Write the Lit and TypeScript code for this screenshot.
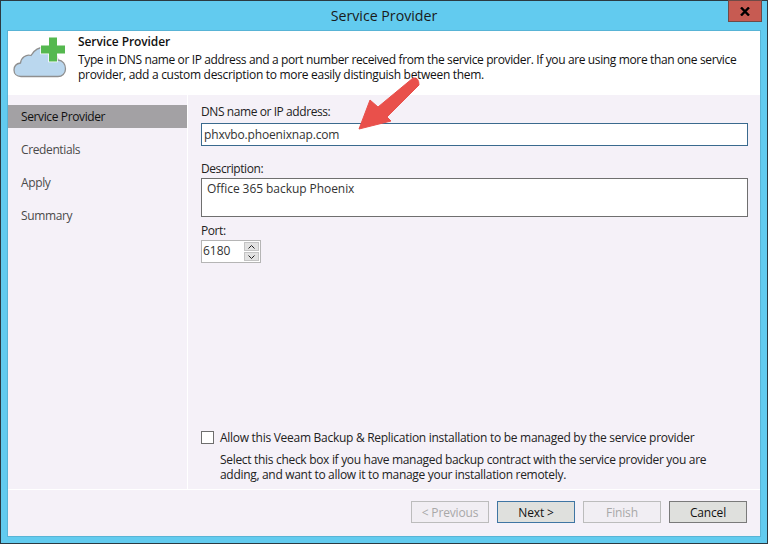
import { LitElement, html, css } from "lit";
import { customElement } from "lit/decorators.js";

@customElement("app-root")
export class AppRoot extends LitElement {
  static styles = css`
    :host { display: block; width: 768px; height: 544px; position: relative; overflow: hidden;
      font-family: "Open Sans", "Noto Sans", sans-serif; font-size: 12px; color: #111; }
    * { box-sizing: border-box; }
    .win { width: 768px; height: 544px; background: #62cbef; border: 1px solid #2b3a42;
      display: flex; flex-direction: column; position: relative; }
    .titlebar { height: 30px; flex: none; display: flex; align-items: center; justify-content: center;
      font-size: 14.2px; color: #1a1a1a; padding-bottom: 2px; }
    .close { position: absolute; right: 5px; top: -1px; width: 34px; height: 22px; background: #c75b52;
      border: 1px solid #6e4a46; display: flex; align-items: center; justify-content: center; }
    .body { margin: 0 7px 7px 7px; flex: 1; display: flex; flex-direction: column; background: #f5f1f8;
      box-shadow: 0 0 0 1px #58b4d6; }
    .head { height: 64px; flex: none; background: #fff; display: flex; }
    .cloud { width: 70px; flex: none; padding: 5px 0 0 5px; }
    .head-text { padding-top: 3px; line-height: 15px; letter-spacing: -0.3px; white-space: nowrap; }
    .head-text b { display: block; font-weight: 600; line-height: 15px; margin-bottom: 3px; letter-spacing: -0.1px; }
    .first { letter-spacing: -0.365px; }
    .middle { flex: 1; display: flex; min-height: 0; border-bottom: 1px solid #fff; }
    .side { width: 179px; flex: none; padding-top: 10px; }
    .step { height: 23px; padding-left: 13px; margin-bottom: 10px; display: flex; align-items: center;
      color: #4a4a4a; letter-spacing: -0.38px; }
    .step.sel { background: #a3a1a4; color: #111; }
    .main { flex: 1; border-left: 1px solid #fff; padding: 9px 12px 0 13px; display: flex; flex-direction: column; }
    label { display: block; line-height: 16px; letter-spacing: -0.42px; color: #222; }
    .input { height: 23px; margin-top: 3px; background: #fff; border: 1px solid #3a6a8e; padding-left: 2px;
      display: flex; align-items: center; color: #333; letter-spacing: -0.16px; }
    .desc { height: 39px; margin-top: 1px; background: #fff; border: 1px solid #6f6f6f; padding: 2px 0 0 5px;
      line-height: 16px; color: #333; letter-spacing: -0.06px; }
    .gap-a { margin-top: 15px; }
    .gap-b { margin-top: 6px; }
    .port { width: 60px; height: 23px; margin-top: 1px; background: #fff; border: 1px solid #b5b5b5;
      display: flex; align-items: stretch; }
    .port span { flex: 1; padding-left: 1px; line-height: 19px; color: #333; }
    .spin { width: 17px; display: flex; flex-direction: column; gap: 1px; background: #fff; padding: 1px; }
    .spin i { flex: 1; background: #e2e2e2; border: 1px solid #c4c4c4; display: flex; align-items: center; justify-content: center; }
    .bottom { margin-top: auto; padding-bottom: 7px; }
    .check { display: flex; align-items: center; gap: 6px; letter-spacing: -0.28px; color: #222; height: 16px; }
    .box { width: 13px; height: 13px; background: #fff; border: 1px solid #6e6e6e; flex: none; }
    .note { margin: 7px 0 0 19px; line-height: 15px; letter-spacing: -0.31px; color: #222; }
    .foot { height: 46px; flex: none; display: flex; justify-content: flex-end; gap: 8px; padding: 11px 13px 0 0; }
    .btn { width: 78px; height: 22px; border: 1px solid #7a7a7a; background: #dfe0dd; display: flex;
      align-items: center; justify-content: center; color: #111; letter-spacing: -0.15px; }
    .btn.def { border-color: #3f75a3; }
    .btn.off { border-color: #bcbcbc; background: #f1eef3; color: #a8a8a8; }
    .arrow { position: absolute; left: 0; top: 0; pointer-events: none; }
  `;

  render() {
    return html`
      <div class="win">
        <div class="titlebar">Service Provider</div>
        <div class="close">
          <svg width="10" height="9" viewBox="0 0 10 9"><path d="M1 0.5L9 8.5M9 0.5L1 8.5" stroke="#000" stroke-width="2.4" fill="none"/></svg>
        </div>
        <div class="body">
          <div class="head">
            <div class="cloud">
              <svg width="56" height="44" viewBox="0 0 56 44">
                <path d="M8 40.500C3.500 40.500 1 37.500 1 34C1 30 4 27.500 7.500 27C8 22 13 18 18 19.500C21 14 27 11 33 11C40 11 44 18 45 24C50 24.500 52.500 28.500 52.500 33C52.500 37.500 49 40.500 45 40.500Z" fill="#bad7ee" stroke="#8f8f8f" stroke-width="1.300"/>
                <path d="M36 1.500H44V9.500H52V17.500H44V25.500H36V17.500H28V9.500H36Z" fill="#55b84f" stroke="#fff" stroke-width="1.500" paint-order="stroke"/>
              </svg>
            </div>
            <div class="head-text">
              <b>Service Provider</b>
              <span class="first">Type in DNS name or IP address and a port number received from the service provider. If you are using more than one service</span><br>provider, add a custom description to more easily distinguish between them.
            </div>
          </div>
          <div class="middle">
            <div class="side">
              <div class="step sel">Service Provider</div>
              <div class="step">Credentials</div>
              <div class="step">Apply</div>
              <div class="step">Summary</div>
            </div>
            <div class="main">
              <label>DNS name or IP address:</label>
              <div class="input">phxvbo.phoenixnap.com</div>
              <label class="gap-a">Description:</label>
              <div class="desc">Office 365 backup Phoenix</div>
              <label class="gap-b">Port:</label>
              <div class="port">
                <span>6180</span>
                <div class="spin">
                  <i><svg width="7" height="4" viewBox="0 0 7 4"><path d="M0.500 3.500L3.500 0.500L6.500 3.500" fill="none" stroke="#222"/></svg></i>
                  <i><svg width="7" height="4" viewBox="0 0 7 4"><path d="M0.500 0.500L3.500 3.500L6.500 0.500" fill="none" stroke="#222"/></svg></i>
                </div>
              </div>
              <div class="bottom">
                <div class="check"><div class="box"></div>Allow this Veeam Backup &amp; Replication installation to be managed by the service provider</div>
                <div class="note">Select this check box if you have managed backup contract with the service provider you are<br>adding, and want to allow it to manage your installation remotely.</div>
              </div>
            </div>
          </div>
          <div class="foot">
            <div class="btn off">&lt; Previous</div>
            <div class="btn def">Next &gt;</div>
            <div class="btn off">Finish</div>
            <div class="btn">Cancel</div>
          </div>
        </div>
        <svg class="arrow" width="768" height="544" viewBox="0 0 768 544">
          <path d="M358 128L369 99L377 106L412 77Q418 76 418 84L386 116L390 120Z" fill="#e9504b" stroke="#e9504b" stroke-width="1" stroke-linejoin="round"/>
        </svg>
      </div>
    `;
  }
}
